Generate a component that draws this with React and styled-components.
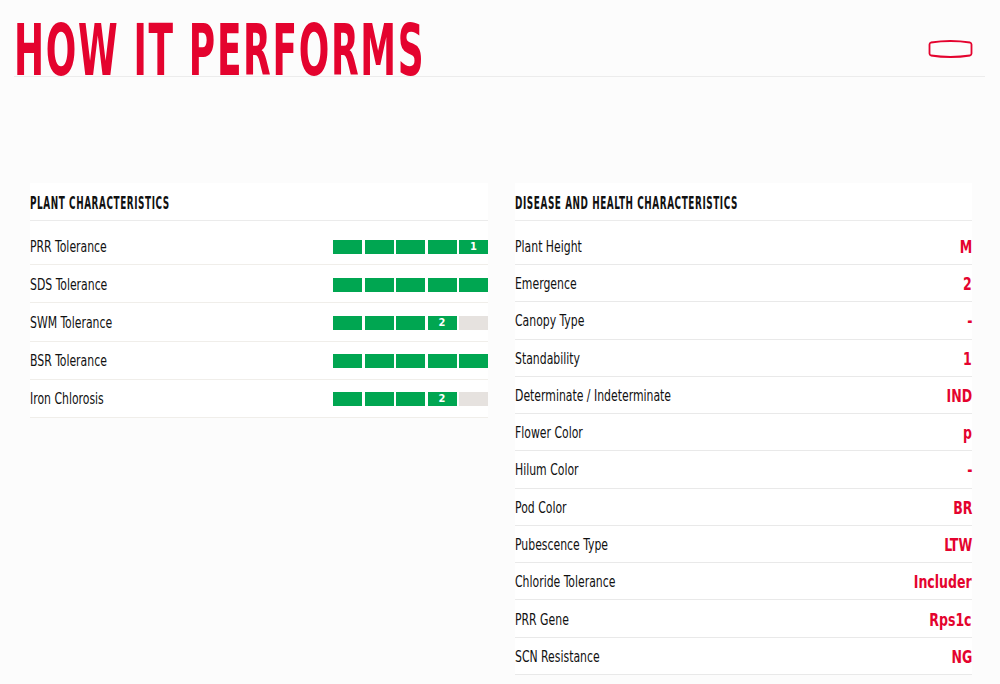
import React from 'react'
import styled, { createGlobalStyle } from 'styled-components'

const GlobalStyle = createGlobalStyle`
  html, body {
    margin: 0;
    padding: 0;
    background: #fcfcfc;
  }
  body {
    font-family: "DejaVu Sans Condensed", "Liberation Sans Narrow", "Liberation Sans", sans-serif;
    color: #1b1b1b;
  }
`

const Page = styled.div`
  width: 1000px;
  height: 684px;
  overflow: hidden;
`

const Header = styled.div`
  display: flex;
  align-items: flex-end;
  justify-content: space-between;
  margin: 0 15px 0 14px;
  height: 76px;
  border-bottom: 1px solid #ececec;
`

const Title = styled.h1`
  margin: 0;
  font-size: 72px;
  line-height: 52px;
  font-weight: 700;
  color: #e4032e;
  letter-spacing: 3px;
  white-space: nowrap;
  transform: scaleX(0.555);
  transform-origin: left bottom;
`

const ToggleIcon = styled.svg`
  width: 45px;
  height: 20px;
  margin: 0 12px 17px 0;
`

const Columns = styled.div`
  display: grid;
  grid-template-columns: 458px 457px;
  column-gap: 27px;
  padding: 106px 0 0 30px;
`

const Panel = styled.section`
  background: #fff;
  align-self: start;
`

const PanelTitle = styled.h2`
  margin: 0;
  padding: 10px 0 7px;
  font-size: 17px;
  line-height: 20px;
  font-weight: 700;
  color: #111;
  border-bottom: 1px solid #ebebeb;
`

const TitleText = styled.span`
  display: inline-block;
  white-space: nowrap;
  letter-spacing: 1px;
  transform: scaleX(0.58);
  transform-origin: left center;
`

const Rows = styled.div`
  padding-top: 8px;
`

const Row = styled.div`
  display: flex;
  align-items: center;
  justify-content: space-between;
  box-sizing: border-box;
  height: ${p => p.$h}px;
  padding-top: ${p => p.$pt}px;
  border-bottom: 1px solid ${p => p.$line};
`

const Label = styled.span`
  display: inline-block;
  white-space: nowrap;
  font-size: 15.5px;
  color: #111;
  transform: scaleX(0.78);
  transform-origin: left center;
`

const Value = styled.span`
  display: inline-block;
  white-space: nowrap;
  font-size: 17px;
  font-weight: 700;
  color: #e4032e;
  transform: scaleX(0.82);
  transform-origin: right center;
`

const Meter = styled.div`
  display: grid;
  grid-template-columns: repeat(5, 29px);
  column-gap: 2.5px;
`

const Segment = styled.div`
  height: 14px;
  background: ${p => (p.$on ? '#00a651' : '#e6e2df')};
  color: #fff;
  font-size: 11px;
  font-weight: 700;
  line-height: 14px;
  text-align: center;
`

const plant = [
  { name: 'PRR Tolerance', score: 5, mark: 1 },
  { name: 'SDS Tolerance', score: 5 },
  { name: 'SWM Tolerance', score: 4, mark: 2 },
  { name: 'BSR Tolerance', score: 5 },
  { name: 'Iron Chlorosis', score: 4, mark: 2 },
]

const disease = [
  ['Plant Height', 'M'],
  ['Emergence', '2'],
  ['Canopy Type', '-'],
  ['Standability', '1'],
  ['Determinate / Indeterminate', 'IND'],
  ['Flower Color', 'p'],
  ['Hilum Color', '-'],
  ['Pod Color', 'BR'],
  ['Pubescence Type', 'LTW'],
  ['Chloride Tolerance', 'Includer'],
  ['PRR Gene', 'Rps1c'],
  ['SCN Resistance', 'NG'],
]

const ScoreBar = ({ score, mark }) => (
  <Meter>
    {[1, 2, 3, 4, 5].map(i => (
      <Segment key={i} $on={i <= score}>
        {mark && i === score ? mark : ''}
      </Segment>
    ))}
  </Meter>
)

export default function App() {
  return (
    <Page>
      <GlobalStyle />
      <Header>
        <Title>HOW IT PERFORMS</Title>
        <ToggleIcon viewBox="0 0 45 20">
          <path
            d="M3 3.5 Q22.5 0.5 42 3.5 Q43.5 4 43.5 5.5 L43.5 14.5 Q43.5 16 42 16.5 Q22.5 19.5 3 16.5 Q1.5 16 1.5 14.5 L1.5 5.5 Q1.5 4 3 3.5 Z"
            fill="none"
            stroke="#e4032e"
            strokeWidth="1.8"
          />
        </ToggleIcon>
      </Header>
      <Columns>
        <Panel>
          <PanelTitle><TitleText>PLANT CHARACTERISTICS</TitleText></PanelTitle>
          <Rows>
            {plant.map((r, i) => (
              <Row key={r.name} $h={i === 0 ? 36 : 38.25} $pt={i === 0 ? 0 : 2} $line="#f0eeea">
                <Label>{r.name}</Label>
                <ScoreBar score={r.score} mark={r.mark} />
              </Row>
            ))}
          </Rows>
        </Panel>
        <Panel>
          <PanelTitle><TitleText>DISEASE AND HEALTH CHARACTERISTICS</TitleText></PanelTitle>
          <Rows>
            {disease.map(([name, val], i) => (
              <Row key={name} $h={i === 0 ? 36 : 37.27} $pt={i === 0 ? 1 : 2} $line="#e9e9e9">
                <Label>{name}</Label>
                <Value>{val}</Value>
              </Row>
            ))}
          </Rows>
        </Panel>
      </Columns>
    </Page>
  )
}
